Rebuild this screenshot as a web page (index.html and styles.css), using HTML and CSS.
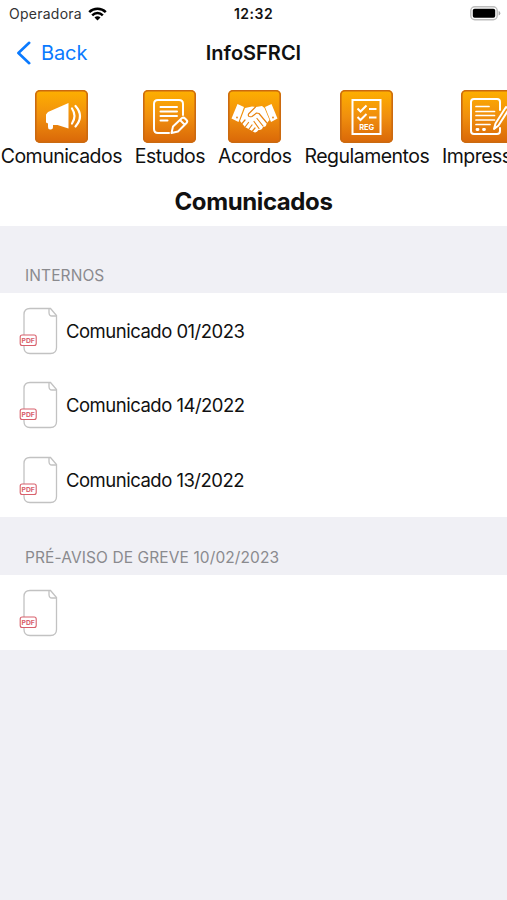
FILE: index.html
```html
<!DOCTYPE html>
<html lang="pt">
<head>
    <meta charset="UTF-8">
    <meta name="viewport" content="width=device-width, initial-scale=1.0">
    <title>InfoSFRCI</title>
    <link rel="stylesheet" href="styles.css">
</head>
<body>
    <!-- Página PDF partilhada pelas linhas da lista -->
    <svg class="defs">
        <symbol id="pdf" viewBox="0 0 40 48">
            <path d="M11 1.500H31.500L37.500 8.500V40.500Q37.500 46.500 31.500 46.500H11Q5 46.500 5 40.500V7.500Q5 1.500 11 1.500Z" fill="#fff" stroke="#c2c2c2" stroke-width="1.3"/>
            <path d="M30 1.500V5.500Q30 9 33 9H37.500" fill="none" stroke="#c2c2c2" stroke-width="1.3"/>
            <rect x="1.200" y="28" width="16" height="10.500" rx="2" fill="#fff" stroke="#d8606c" stroke-width="1.1"/>
            <text x="9.200" y="35.800" text-anchor="middle" class="pdf-label">PDF</text>
        </symbol>
    </svg>

    <header>
        <div class="status-bar">
            <div class="carrier">
                <span>Operadora</span>
                <svg width="19" height="14" viewBox="0 0 19 14" fill="none" stroke="#000" stroke-width="2.5">
                    <path d="M1.200 5.100a11.800 11.800 0 0 1 16.600 0"/>
                    <path d="M4.200 8.300a7.500 7.500 0 0 1 10.600 0"/>
                    <path d="M9.500 13.500L6.500 10.500a4.200 4.200 0 0 1 6 0Z" fill="#000" stroke="none"/>
                </svg>
            </div>
            <div class="clock">12:32</div>
            <svg class="battery" width="31" height="15" viewBox="0 0 31 15">
                <rect x="0.800" y="0.800" width="26.400" height="13" rx="4" fill="#fff" stroke="#bdbdbd" stroke-width="1.4"/>
                <rect x="2.800" y="2.800" width="22.400" height="9" rx="1.800" fill="#000"/>
                <path d="M28.600 5v4.600q1.700-.6 1.700-2.300t-1.700-2.300Z" fill="#aaa"/>
            </svg>
        </div>
        <nav class="nav-bar">
            <a class="back" href="#">
                <svg width="15" height="24" viewBox="0 0 15 24" fill="none" stroke="#0a7aff" stroke-width="2.6" stroke-linecap="round" stroke-linejoin="round">
                    <path d="M13.200 1.800L2.400 12L13.200 22.200"/>
                </svg>
                <span>Back</span>
            </a>
            <h1>InfoSFRCI</h1>
        </nav>
    </header>

    <div class="tabs">
        <a class="tab">
            <svg class="tab-icon" viewBox="0 0 53 53">
                <path d="M33.500 13V38.500L22.500 35H18V37Q18 39.500 15.500 39.500H15Q13 39.500 13 37V33.500L11 32.500V24.500L13 22Z" fill="#fff"/>
                <g fill="none" stroke="#fff" stroke-width="2.2" stroke-linecap="round">
                    <path d="M37 18.500Q42 26 37 33.500"/>
                    <path d="M40.500 16Q49.500 26 40.500 36.500"/>
                </g>
            </svg>
            <span>Comunicados</span>
        </a>
        <a class="tab">
            <svg class="tab-icon" viewBox="0 0 53 53" fill="none" stroke="#fff" stroke-width="2" stroke-linecap="round" stroke-linejoin="round">
                <path d="M26 43H15Q11 43 11 39V14Q11 10 15 10H36Q40 10 40 14V25"/>
                <path d="M17.500 17H34M17.500 21.500H34M17.500 26H34M17.500 30.500H24.500"/>
                <path d="M28.500 43L30 36.500L39 28Q40.500 27 42 28.500L43.500 30Q45 31.500 43.500 33L35 41.500ZM37 30L41.500 34.500"/>
            </svg>
            <span>Estudos</span>
        </a>
        <a class="tab">
            <svg class="tab-icon" viewBox="0 0 53 53">
                <g fill="#fff">
                    <path d="M9.500 14L16 17L10.500 32L3.500 28.500Z"/>
                    <path d="M43.500 14L49.500 28.500L43 32L37 17Z"/>
                    <path d="M17 18L24 16.500L28 17L34 16L36.500 18L41.500 30L38.500 33.500Q38.500 37 35 37Q34 40.500 30.500 40Q28 44 25 41.500L17 37L12 31Z"/>
                </g>
                <g fill="none" stroke="#e88310" stroke-width="1.2" stroke-linecap="round" stroke-linejoin="round">
                    <path d="M27.500 17L20.500 24Q19.500 27.500 24 26.500L28.500 23L31 23.500L38.500 32.500"/>
                    <path d="M29 28.500L35 36M26 31.500L31 38.500M14 33.500L17 30M17.500 36.500L20.500 32.500M21 39L24 35M24.500 41L27 38"/>
                </g>
                <g fill="#e88310">
                    <circle cx="9" cy="27.500" r="0.900"/>
                    <circle cx="45" cy="27.500" r="0.900"/>
                </g>
            </svg>
            <span>Acordos</span>
        </a>
        <a class="tab">
            <svg class="tab-icon" viewBox="0 0 53 53" fill="none" stroke="#fff" stroke-width="2">
                <rect x="12.500" y="10" width="28" height="34"/>
                <path d="M17.500 18.500L20.500 21.500L26.500 15.500M17.500 27L20.500 30L26.500 24M29 19H36.500M29 27.500H36.500"/>
                <text x="26.700" y="39.500" text-anchor="middle" class="reg-label">REG</text>
            </svg>
            <span>Regulamentos</span>
        </a>
        <a class="tab">
            <svg class="tab-icon" viewBox="0 0 53 53" fill="none" stroke="#fff" stroke-width="2" stroke-linecap="round" stroke-linejoin="round">
                <path d="M39 20V12Q39 9 36 9H13Q10 9 10 12V41Q10 44 13 44H36Q39 44 39 41V38"/>
                <path d="M15 16.500H28M15 21.500H33.500M15 25.500H33.500M15 30H33.500M15 34.500H29" stroke-width="1.7"/>
                <path d="M33 39L34.500 33.500L45 17L48 19L37.500 35.500Z"/>
                <path d="M16 39.500H17M22.500 39.500H23.500" stroke-width="2.8"/>
            </svg>
            <span>Impressos</span>
        </a>
    </div>

    <h2>Comunicados</h2>

    <main>
        <h3 class="section-title first">INTERNOS</h3>
        <ul class="list">
            <li><svg class="pdf"><use href="#pdf"/></svg><span>Comunicado 01/2023</span></li>
            <li><svg class="pdf"><use href="#pdf"/></svg><span>Comunicado 14/2022</span></li>
            <li><svg class="pdf"><use href="#pdf"/></svg><span>Comunicado 13/2022</span></li>
        </ul>
        <h3 class="section-title">PRÉ-AVISO DE GREVE 10/02/2023</h3>
        <ul class="list">
            <li><svg class="pdf"><use href="#pdf"/></svg></li>
        </ul>
    </main>
</body>
</html>
```
FILE: styles.css
```css
* {
    margin: 0;
    padding: 0;
    box-sizing: border-box;
}

body {
    font-family: Inter, 'Liberation Sans', sans-serif;
    background: #fff;
    color: #111;
    height: 100vh;
    display: flex;
    flex-direction: column;
    overflow: hidden;
}

.defs {
    display: none;
}

.status-bar {
    display: grid;
    grid-template-columns: 1fr auto 1fr;
    align-items: center;
    height: 27px;
    padding: 0 6px 0 9px;
    font-size: 14px;
}

.carrier {
    display: flex;
    align-items: center;
    gap: 6px;
    color: #333;
    letter-spacing: 0.25px;
}

.clock {
    margin-left: -3px;
    font-weight: 600;
    letter-spacing: 0.5px;
}

.battery {
    justify-self: end;
}

.nav-bar {
    display: grid;
    grid-template-columns: 1fr auto 1fr;
    align-items: center;
    height: 50px;
    padding: 1px 16px 0;
}

.back {
    display: flex;
    align-items: center;
    gap: 10px;
    color: #0a7aff;
    font-size: 20px;
    letter-spacing: -0.1px;
    text-decoration: none;
}

h1 {
    font-size: 20px;
    font-weight: 600;
}

.tabs {
    display: flex;
    gap: 12.9px;
    height: 100px;
    padding: 13px 0 0 0.7px;
    overflow: hidden;
}

.tab {
    flex: none;
    display: flex;
    flex-direction: column;
    align-items: center;
    font-size: 19.5px;
    line-height: 26px;
    letter-spacing: -0.52px;
}

.tab-icon {
    width: 53px;
    height: 53px;
    border-radius: 5px;
    background: linear-gradient(#feb000, #f08f0e 50%, #d96708);
    box-shadow: inset 0 0 0 1.6px #cb6a10;
}

h2 {
    height: 49px;
    line-height: 49px;
    text-align: center;
    font-size: 24px;
    font-weight: 700;
    letter-spacing: -0.4px;
}

main {
    flex: 1;
    background: #f0f0f5;
}

.section-title {
    display: flex;
    align-items: flex-end;
    height: 58px;
    padding: 0 25px 7px;
    color: #8a8a8e;
    font-size: 15.5px;
    font-weight: 400;
    line-height: 20px;
    letter-spacing: 0.1px;
}

.section-title.first {
    height: 67px;
}

.list {
    background: #fff;
    list-style: none;
}

.list li {
    display: flex;
    align-items: center;
    gap: 7px;
    height: 74.7px;
    padding: 0.4px 19px 0;
    font-size: 18.5px;
    letter-spacing: -0.5px;
}

.pdf {
    width: 40px;
    height: 48px;
}

.pdf-label {
    font-size: 6.8px;
    font-weight: 700;
    letter-spacing: 0;
    fill: #d8606c;
}

.reg-label {
    font-size: 7.5px;
    font-weight: 700;
    letter-spacing: 0;
    fill: #fff;
    stroke: none;
}
```
